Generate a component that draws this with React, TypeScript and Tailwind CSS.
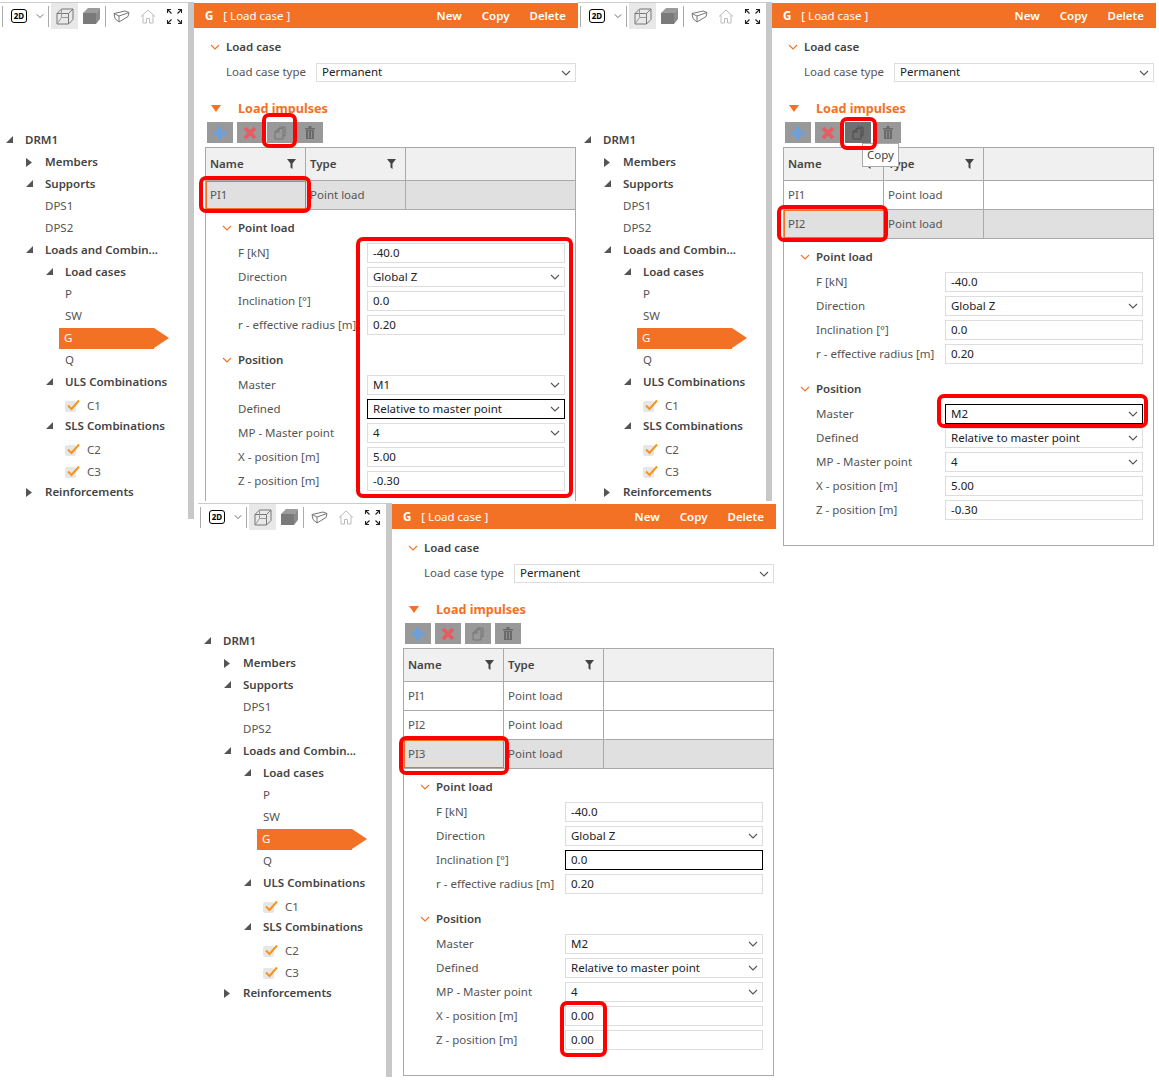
import React from "react"

const font = "font-['Noto_Sans','Open_Sans',sans-serif]"

function TreeArrow({ open }: { open: boolean }) {
  if (open) {
    return (
      <svg width="7" height="7" viewBox="0 0 7 7" className="block">
        <path d="M7 0V7H0Z" fill="#555" />
      </svg>
    )
  }
  return (
    <svg width="6" height="9" viewBox="0 0 6 9" className="block">
      <path d="M0 0L6 4.5L0 9Z" fill="#555" />
    </svg>
  )
}

function Chevron({ color = "#555", w = 10 }: { color?: string; w?: number }) {
  return (
    <svg width={w} height="6" viewBox="0 0 10 6" className="block">
      <path d="M1 1L5 5L9 1" fill="none" stroke={color} strokeWidth="1.1" />
    </svg>
  )
}

function ToolbarIcons() {
  return (
    <div className="flex h-[27px] items-center border-t border-[#ccc] bg-white">
      <div className="ml-[2px] h-[21px] w-px bg-[#aaa]" />
      <div className="ml-[8px] flex h-[14px] w-[16px] items-center justify-center rounded-[3px] border border-black text-[8px] font-bold leading-none text-black">
        2D
      </div>
      <div className="ml-[9px]">
        <Chevron w={8} />
      </div>
      <div className="ml-[4px] h-[21px] w-px bg-[#aaa]" />
      <div className="ml-[2px] flex h-[26px] w-[27px] items-center justify-center bg-[#e8e8e8]">
        <svg width="18" height="17" viewBox="0 0 18 17" fill="none" stroke="#777" strokeWidth="1">
          <path d="M1 5.5H12.5V16H1ZM1 5.5L5.5 1H17V11.5L12.5 16M12.5 5.5L17 1" />
          <path d="M5.5 1V9.5M5.5 9.5L1 16M5.5 9.5H12.5" stroke="#999" />
        </svg>
      </div>
      <div className="ml-[5px]">
        <svg width="17" height="16" viewBox="0 0 17 16" className="block">
          <path d="M0 5L5 0H17L13 5Z" fill="#9c9c9c" />
          <path d="M0 5H13V16H0Z" fill="#7a7a7a" />
          <path d="M13 5L17 0V11L13 16Z" fill="#8c8c8c" />
        </svg>
      </div>
      <div className="ml-[5px] h-[21px] w-px bg-[#aaa]" />
      <div className="ml-[7px]">
        <svg width="17" height="13" viewBox="0 0 17 13" fill="none" stroke="#777" strokeWidth="1" className="block">
          <path d="M1 3.5L12 1L16 2.5L6 6L1 3.5ZM1 3.5L2 8.5L6 12V6M6 12L15 6.5L16 2.5" />
        </svg>
      </div>
      <div className="ml-[10px]">
        <svg width="16" height="15" viewBox="0 0 16 15" fill="none" stroke="#bbb" strokeWidth="1" className="block">
          <path d="M1 7.5L8 1L15 7.5M3 6V14H6.5V9.5H9.5V14H13V6" />
        </svg>
      </div>
      <div className="ml-[10px]">
        <svg width="17" height="17" viewBox="0 0 17 17" fill="none" stroke="#222" strokeWidth="1.1" className="block">
          <path d="M1.5 5V1.5H5M1.5 1.5L5.5 5.5M12 1.5H15.5V5M15.5 1.5L11.5 5.5M1.5 12V15.5H5M1.5 15.5L5.5 11.5M12 15.5H15.5V12M15.5 15.5L11.5 11.5" />
        </svg>
      </div>
    </div>
  )
}

function TreeRow({
  indent,
  arrow,
  label,
  bold = false,
}: {
  indent: number
  arrow?: "open" | "closed"
  label: string
  bold?: boolean
}) {
  return (
    <div className="relative flex h-[22px] items-center">
      {arrow && (
        <div className="absolute top-[7px]" style={{ left: indent - 19 }}>
          <TreeArrow open={arrow === "open"} />
        </div>
      )}
      <span
        className={"whitespace-nowrap text-[11.5px] " + (bold ? "font-semibold text-[#444]" : "text-[#555]")}
        style={{ marginLeft: indent }}
      >
        {label}
      </span>
    </div>
  )
}

function CheckRow({ label }: { label: string }) {
  return (
    <div className="flex h-[22px] items-center pt-1 pl-[65px]">
      <div className="relative h-[11px] w-[11px] rounded-[2px] bg-[#e6e6e6]">
        <svg width="13" height="12" viewBox="0 0 13 12" className="absolute left-[2px] top-[-2px]">
          <path d="M1 6.5L4.5 10L12 1.5" fill="none" stroke="#f7941d" strokeWidth="2" />
        </svg>
      </div>
      <span className="ml-[11px] text-[11.5px] text-[#555]">{label}</span>
    </div>
  )
}

function Tree() {
  return (
    <div className="pt-[100px]">
      <TreeRow indent={25} arrow="open" label="DRM1" bold />
      <TreeRow indent={45} arrow="closed" label="Members" bold />
      <TreeRow indent={45} arrow="open" label="Supports" bold />
      <TreeRow indent={45} label="DPS1" />
      <TreeRow indent={45} label="DPS2" />
      <TreeRow indent={45} arrow="open" label="Loads and Combin..." bold />
      <TreeRow indent={65} arrow="open" label="Load cases" bold />
      <TreeRow indent={65} label="P" />
      <TreeRow indent={65} label="SW" />
      <div className="flex h-[22px] items-center pl-[59px]">
        <div className="flex h-[21px] w-[95px] items-center bg-[#f37124] pl-[5px] text-[11.5px] text-white">G</div>
        <div className="h-0 w-0 border-y-[10.5px] border-l-[15px] border-y-transparent border-l-[#f37124]" />
      </div>
      <TreeRow indent={65} label="Q" />
      <TreeRow indent={65} arrow="open" label="ULS Combinations" bold />
      <CheckRow label="C1" />
      <TreeRow indent={65} arrow="open" label="SLS Combinations" bold />
      <CheckRow label="C2" />
      <CheckRow label="C3" />
      <TreeRow indent={45} arrow="closed" label="Reinforcements" bold />
    </div>
  )
}

function Field({ value, select = false, focus = false }: { value: string; select?: boolean; focus?: boolean }) {
  return (
    <div
      className={
        "flex h-[20px] w-[198px] items-center justify-between border pl-[5px] pr-[4px] text-[11.5px] text-[#222] " +
        (focus ? "border-black" : "border-[#ddd]")
      }
    >
      <span>{value}</span>
      {select && <Chevron />}
    </div>
  )
}

function FieldRow({ label, children }: { label: string; children: React.ReactNode }) {
  return (
    <div className="flex h-[24px] items-center pl-[32px]">
      <span className="w-[129px] whitespace-nowrap text-[11.5px] text-[#555]">{label}</span>
      {children}
    </div>
  )
}

function ActionButton({ children, dark = false }: { children: React.ReactNode; dark?: boolean }) {
  return (
    <div className={"flex h-[21px] w-[26px] items-center justify-center " + (dark ? "bg-[#6f6f6f]" : "bg-[#999]")}>
      {children}
    </div>
  )
}

function Funnel() {
  return (
    <svg width="9" height="10" viewBox="0 0 9 10" className="block">
      <path d="M0 0H9L5.5 4.5V10L3.5 8.5V4.5Z" fill="#444" />
    </svg>
  )
}

interface PanelProps {
  rows: string[]
  selected: number
  master: string
  x: string
  z: string
  focus: string
  hoverCopy?: boolean
}

function RightPane({ rows, selected, master, x, z, focus, hoverCopy }: PanelProps) {
  return (
    <div className="w-[384px] bg-white pt-px">
      <div className="flex h-[25px] items-center bg-[#f37124] text-[11.5px] text-white">
        <span className="ml-[11px] font-bold">G</span>
        <span className="ml-[10px]">[ Load case ]</span>
        <span className="ml-auto font-semibold">New</span>
        <span className="ml-[20px] font-semibold">Copy</span>
        <span className="ml-[20px] mr-[12px] font-semibold">Delete</span>
      </div>

      <div className="mt-[9px] flex h-[20px] items-center pl-[16px]">
        <Chevron color="#f37124" />
        <span className="ml-[6px] text-[11.5px] font-semibold text-[#444]">Load case</span>
      </div>
      <div className="mt-[6px] flex h-[19px] items-center pl-[32px]">
        <span className="w-[90px] whitespace-nowrap pb-px text-[11.5px] text-[#555]">Load case type</span>
        <div className="flex h-[19px] w-[260px] items-center justify-between border border-[#ddd] pl-[5px] pr-[4px] text-[11.5px] text-[#222]">
          <span className="pb-px">Permanent</span>
          <Chevron />
        </div>
      </div>

      <div className="mt-[16px] flex h-[20px] items-center pl-[17px]">
        <div className="h-0 w-0 border-x-[5px] border-t-[7px] border-x-transparent border-t-[#f37124]" />
        <span className="ml-[17px] pt-[2px] text-[12.6px] font-bold text-[#f37124]">Load impulses</span>
      </div>

      <div className="ml-[13px] mt-[4px] flex gap-[4px]">
        <ActionButton>
          <svg width="14" height="14" viewBox="0 0 14 14" className="block">
            <path d="M7 0.5V13.5M0.5 7H13.5" stroke="#6d9fd8" strokeWidth="4" />
          </svg>
        </ActionButton>
        <ActionButton>
          <svg width="14" height="14" viewBox="0 0 14 14" className="block">
            <path d="M2 2L12 12M12 2L2 12" stroke="#ea5a5f" strokeWidth="3.6" />
          </svg>
        </ActionButton>
        <ActionButton dark={hoverCopy}>
          <svg width="12" height="14" viewBox="0 0 12 14" fill="none" stroke={hoverCopy ? "#4f4f4f" : "#777"} strokeWidth="1.1" className="block">
            <path d="M5 1H10Q11 1 11 2V9Q11 10 10 10H9" />
            <path d="M1 6L5 2.5H8Q9 2.5 9 3.5V12Q9 13 8 13H2Q1 13 1 12Z" />
            <path d="M5 2.5V6H1" />
          </svg>
        </ActionButton>
        <ActionButton>
          <svg width="10" height="13" viewBox="0 0 10 13" className="block">
            <path d="M0 2H10V3.4H0ZM3.5 0H6.5V2H3.5ZM1 4H9V13H1Z" fill="#6a6a6a" />
            <path d="M3.5 5V12M6.5 5V12" stroke="#999" strokeWidth="0.8" />
          </svg>
        </ActionButton>
      </div>

      <div className="ml-[11px] mt-[4px] w-[371px] border border-[#aaa] text-[11.5px]">
        <div className="grid h-[33px] grid-cols-[100px_100px_1fr] border-b border-[#aaa] bg-[#f0f0f0]">
          <div className="flex items-center justify-between border-r border-[#aaa] pl-[4px] pr-[9px] font-semibold text-[#444]">
            <span>Name</span>
            <Funnel />
          </div>
          <div className="flex items-center justify-between border-r border-[#aaa] pl-[4px] pr-[9px] font-semibold text-[#444]">
            <span>Type</span>
            <Funnel />
          </div>
          <div />
        </div>
        {rows.map((name, i) => (
          <div
            key={name}
            className={
              "grid h-[29px] grid-cols-[100px_100px_1fr] border-b border-[#aaa] text-[#555] " +
              (i === selected ? "bg-[#e0e0e0]" : "")
            }
          >
            <div
              className={
                "flex items-center " +
                (i === selected ? "border border-[#f37124] pl-[3px]" : "border-r border-[#aaa] pl-[4px]")
              }
            >
              <span>{name}</span>
            </div>
            <div className="flex items-center border-r border-[#aaa] pl-[4px]">
              <span>Point load</span>
            </div>
            <div />
          </div>
        ))}

        <div className="pb-[23px] pt-[8px]">
          <div className="flex h-[20px] items-center pl-[16px]">
            <Chevron color="#f37124" />
            <span className="ml-[6px] font-semibold text-[#444]">Point load</span>
          </div>
          <div className="mt-[3px]">
            <FieldRow label="F [kN]">
              <Field value="-40.0" />
            </FieldRow>
            <FieldRow label="Direction">
              <Field value="Global Z" select />
            </FieldRow>
            <FieldRow label="Inclination [°]">
              <Field value="0.0" focus={focus === "inclination"} />
            </FieldRow>
            <FieldRow label="r - effective radius [m]">
              <Field value="0.20" />
            </FieldRow>
          </div>
          <div className="mt-[13px] flex h-[20px] items-center pl-[16px]">
            <Chevron color="#f37124" />
            <span className="ml-[6px] font-semibold text-[#444]">Position</span>
          </div>
          <div className="mt-[3px]">
            <FieldRow label="Master">
              <Field value={master} select focus={focus === "master"} />
            </FieldRow>
            <FieldRow label="Defined">
              <Field value="Relative to master point" select focus={focus === "defined"} />
            </FieldRow>
            <FieldRow label="MP - Master point">
              <Field value="4" select />
            </FieldRow>
            <FieldRow label="X - position [m]">
              <Field value={x} />
            </FieldRow>
            <FieldRow label="Z - position [m]">
              <Field value={z} />
            </FieldRow>
          </div>
        </div>
      </div>
    </div>
  )
}

function Win({ left, top, height, panel }: { left: number; top: number; height: number; panel: PanelProps }) {
  return (
    <div className="absolute flex w-[578px] overflow-hidden bg-white pt-[2px]" style={{ left, top, height }}>
      <div className="w-[188px] shrink-0">
        <ToolbarIcons />
        <Tree />
      </div>
      <div className="w-[6px] shrink-0 bg-[#c8c8c8]" />
      <RightPane {...panel} />
    </div>
  )
}

const marks = [
  { l: 262, t: 113, w: 35, h: 35 },
  { l: 199, t: 176, w: 112, h: 37 },
  { l: 356, t: 237, w: 217, h: 261 },
  { l: 840, t: 117, w: 37, h: 33 },
  { l: 777, t: 205, w: 111, h: 37 },
  { l: 937, t: 394, w: 211, h: 34 },
  { l: 399, t: 736, w: 110, h: 39 },
  { l: 560, t: 1001, w: 47, h: 56 },
]

export default function App() {
  return (
    <div className={"relative h-[1080px] w-[1159px] overflow-hidden bg-white " + font}>
      <Win
        left={0}
        top={0}
        height={519}
        panel={{ rows: ["PI1"], selected: 0, master: "M1", x: "5.00", z: "-0.30", focus: "defined" }}
      />
      <Win
        left={578}
        top={0}
        height={546}
        panel={{ rows: ["PI1", "PI2"], selected: 1, master: "M2", x: "5.00", z: "-0.30", focus: "master", hoverCopy: true }}
      />
      {/* tooltip sits on the second window's toolbar */}
      <div className="absolute left-[862px] top-[143px] flex h-[24px] w-[37px] items-center border border-[#aaa] bg-white pl-[4px] text-[11.5px] text-[#444]">
        Copy
      </div>
      <Win
        left={198}
        top={501}
        height={576}
        panel={{ rows: ["PI1", "PI2", "PI3"], selected: 2, master: "M2", x: "0.00", z: "0.00", focus: "inclination" }}
      />
      {marks.map((m) => (
        <div
          key={m.l + "-" + m.t}
          className="absolute rounded-[7px] border-4 border-[#ff0000]"
          style={{ left: m.l, top: m.t, width: m.w, height: m.h }}
        />
      ))}
    </div>
  )
}
